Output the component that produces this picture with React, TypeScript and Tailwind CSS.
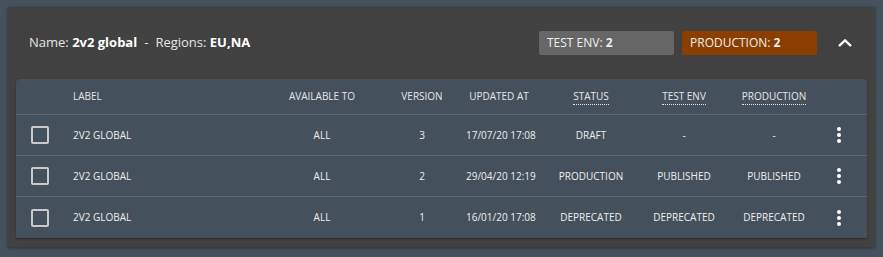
import React from 'react';

type Row = {
  label: string;
  available: string;
  version: number;
  updated: string;
  status: string;
  testEnv: string;
  production: string;
};

const rows: Row[] = [
  { label: '2V2 GLOBAL', available: 'ALL', version: 3, updated: '17/07/20 17:08', status: 'DRAFT', testEnv: '-', production: '-' },
  { label: '2V2 GLOBAL', available: 'ALL', version: 2, updated: '29/04/20 12:19', status: 'PRODUCTION', testEnv: 'PUBLISHED', production: 'PUBLISHED' },
  { label: '2V2 GLOBAL', available: 'ALL', version: 1, updated: '16/01/20 17:08', status: 'DEPRECATED', testEnv: 'DEPRECATED', production: 'DEPRECATED' },
];

const cols = 'grid grid-cols-[57px_193px_112px_88px_66px_118px_68px_112px_18px_1fr] items-center';

const Kebab: React.FC = () => (
  <div className="flex flex-col items-center gap-[2px]">
    <span className="block w-[4px] h-[4px] rounded-full bg-white"></span>
    <span className="block w-[4px] h-[4px] rounded-full bg-white"></span>
    <span className="block w-[4px] h-[4px] rounded-full bg-white"></span>
  </div>
);

const App: React.FC = () => {
  return (
    <div
      className="min-h-screen w-full bg-[#45515c] pt-[7px] px-[8px] pb-[10px] text-[#ececec]"
      style={{ fontFamily: '"Open Sans", "Liberation Sans", sans-serif' }}
    >
      <div className="bg-[#414141] px-[8px] pb-[9px] shadow-[0_1px_3px_rgba(0,0,0,0.4)]">
        <div className="h-[72px] flex items-center justify-between pl-[13px] pr-[14px]">
          <div className="text-[13px] text-[#e6e6e6]">
            Name: <span className="font-bold text-white">2v2 global</span>
            <span className="mx-[7px]">-</span>
            Regions: <span className="font-bold text-white">EU,NA</span>
          </div>
          <div className="flex items-center">
            <div className="w-[135px] h-[24px] rounded-[2px] bg-[#666666] flex items-center pl-[8px] text-[12px] text-[#eeeeee]">
              TEST ENV:&nbsp;<span className="font-bold">2</span>
            </div>
            <div className="w-[135px] h-[24px] ml-[8px] rounded-[2px] bg-[#8a3e00] flex items-center pl-[8px] text-[12px] text-[#eeeeee]">
              PRODUCTION:&nbsp;<span className="font-bold">2</span>
            </div>
            <button className="ml-[20px] w-[16px] h-[16px] flex items-center justify-center text-white">
              <svg className="w-[16px] h-[16px]" viewBox="0 0 24 24" fill="none" stroke="currentColor" strokeWidth={3.5} strokeLinecap="round" strokeLinejoin="round">
                <path d="M4 15.5l8-7.5 8 7.5" />
              </svg>
            </button>
          </div>
        </div>

        <div className="bg-[#44505b] rounded-t-[4px] shadow-[0_1px_2px_rgba(0,0,0,0.35)] text-[10px]">
          <div className={`${cols} h-[36px] border-b border-[#5a6670] text-[#e4e6e8]`}>
            <div></div>
            <div>LABEL</div>
            <div className="text-center">AVAILABLE TO</div>
            <div className="text-center">VERSION</div>
            <div className="text-center whitespace-nowrap">UPDATED AT</div>
            <div className="text-center">
              <span className="border-b border-dotted border-[#e4e6e8] pb-[1px]">STATUS</span>
            </div>
            <div className="text-center whitespace-nowrap">
              <span className="border-b border-dotted border-[#e4e6e8] pb-[1px]">TEST ENV</span>
            </div>
            <div className="text-center">
              <span className="border-b border-dotted border-[#e4e6e8] pb-[1px]">PRODUCTION</span>
            </div>
            <div></div>
            <div></div>
          </div>
          {rows.map((row, i) => (
            <div
              key={row.version}
              className={`${cols} h-[41px] text-[#eeeeee] ${i < rows.length - 1 ? 'border-b border-[#5a6670]' : ''}`}
            >
              <div className="pl-[15px]">
                <div className="w-[18px] h-[18px] border-2 border-[#c9c9c9] rounded-[2px]"></div>
              </div>
              <div>{row.label}</div>
              <div className="text-center">{row.available}</div>
              <div className="text-center">{row.version}</div>
              <div className="text-center whitespace-nowrap">{row.updated}</div>
              <div className="text-center">{row.status}</div>
              <div className="text-center">{row.testEnv}</div>
              <div className="text-center">{row.production}</div>
              <div className="flex justify-center">
                <Kebab />
              </div>
              <div></div>
            </div>
          ))}
        </div>
      </div>
    </div>
  );
};

export default App;
